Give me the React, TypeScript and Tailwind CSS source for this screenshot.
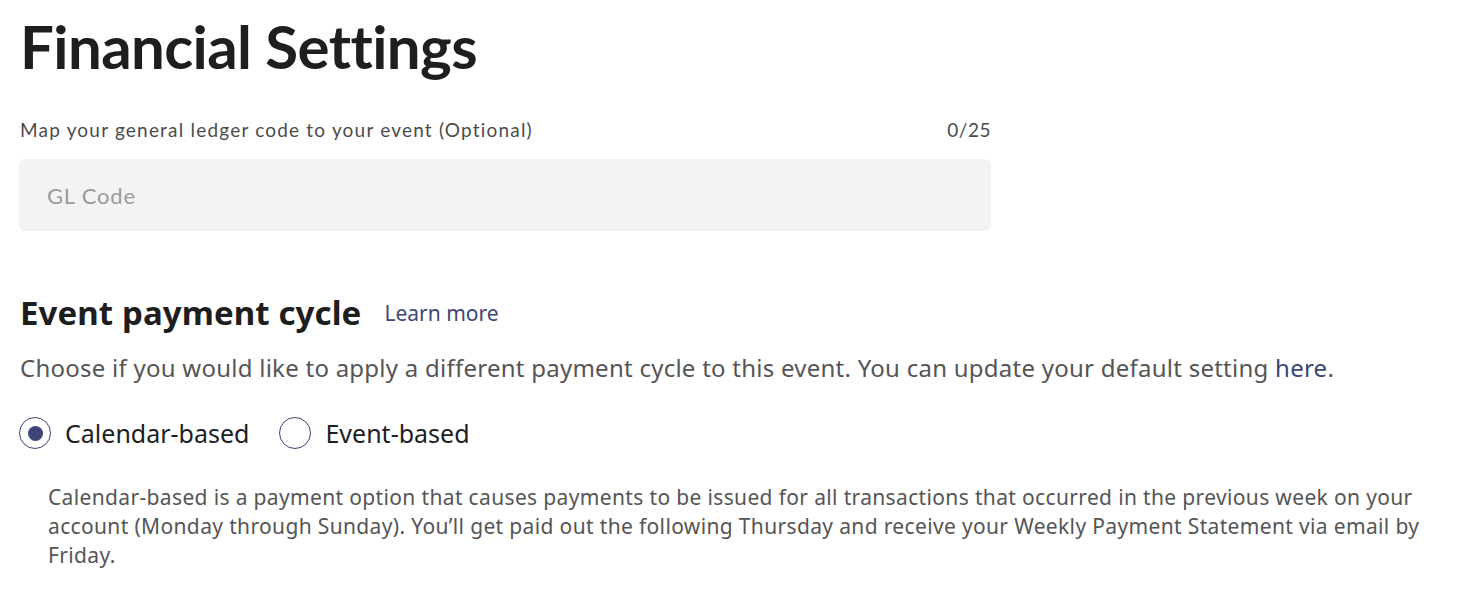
import React from "react";

const plex = { fontFamily: "'Noto Sans', 'Open Sans', sans-serif" };

export default function App() {
  return (
    <div className="bg-white w-[1476px] h-[600px] overflow-hidden">
      <div className="pl-[20px] pt-[12px]">
        <h1 className="text-[60px] leading-[68px] font-bold text-[#1e1e1e] [font-family:Lato,sans-serif] tracking-[-0.6px]">
          Financial Settings
        </h1>
        <div className="w-[971px] mt-[38px]">
          <div className="flex justify-between items-center text-[19px] leading-[24px] text-[#4b4b4b] [font-family:Lato,sans-serif]">
            <span className="tracking-[1.2px]">Map your general ledger code to your event (Optional)</span>
            <span className="tracking-[0.5px]">0/25</span>
          </div>
          <div className="mt-[17px] h-[72px] bg-[#f3f3f3] rounded-[6px] flex items-center pl-[28px] text-[22px] tracking-[0.8px] text-[#9a9a9a] [font-family:Lato,sans-serif] -ml-px">
            GL Code
          </div>
        </div>
        <div className="flex items-center gap-[23px] mt-[62px]" style={plex}>
          <h2 className="text-[33px] leading-[40px] font-bold text-[#1e1e1e] tracking-[0.1px]">Event payment cycle</h2>
          <a className="text-[21px] leading-[28px] text-[#3d4677]">Learn more</a>
        </div>
        <p className="mt-[19px] text-[24px] leading-[32px] tracking-[0.25px] text-[#555555]" style={plex}>
          Choose if you would like to apply a different payment cycle to this event. You can update your default setting{" "}
          <span className="text-[#3d4677]">here</span>.
        </p>
        <div className="flex items-center mt-[33px] -ml-px" style={plex}>
          <div className="flex items-center gap-[14px]">
            <span className="w-[32px] h-[32px] rounded-full border border-[#3d4677] flex items-center justify-center">
              <span className="w-[15px] h-[15px] rounded-full bg-[#3d4677]" />
            </span>
            <span className="text-[25px] leading-[32px] text-[#1e1e1e]">Calendar-based</span>
          </div>
          <div className="flex items-center gap-[14px] ml-[30px]">
            <span className="w-[32px] h-[32px] rounded-full border border-[#3d4677]" />
            <span className="text-[25px] leading-[32px] text-[#1e1e1e]">Event-based</span>
          </div>
        </div>
        <p className="mt-[34px] ml-[28px] w-[1420px] text-[21px] leading-[29px] text-[#555555] tracking-[0.35px]" style={plex}>
          Calendar-based is a payment option that causes payments to be issued for all transactions that occurred in the previous week on your
          <br />
          account (Monday through Sunday). You’ll get paid out the following Thursday and receive your Weekly Payment Statement via email by
          <br />
          Friday.
        </p>
      </div>
    </div>
  );
}
